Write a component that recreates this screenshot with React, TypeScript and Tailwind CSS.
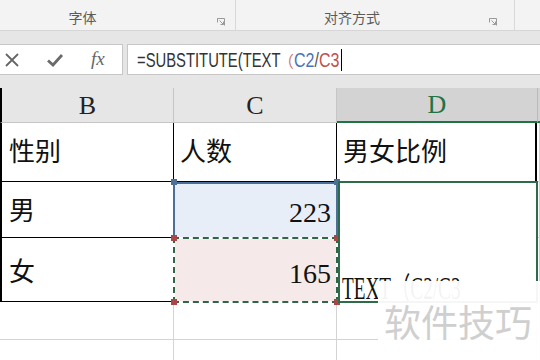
import React from "react";

const serif = { fontFamily: '"Liberation Serif", "Noto Sans CJK SC", serif' };
const sans = { fontFamily: '"Liberation Sans", "Noto Sans CJK SC", sans-serif' };

function Launcher() {
  return (
    <svg width="8" height="8" viewBox="0 0 8 8" className="text-[#9a9a9a]">
      <path d="M0.5 0.5h7v7" fill="none" stroke="currentColor" strokeWidth="1" />
      <path d="M0.5 0.5v4M0.5 0.5h4M2.5 2.5l4 4M6.5 3.5v3h-3" fill="none" stroke="currentColor" strokeWidth="1" />
    </svg>
  );
}

function Ribbon() {
  return (
    <div className="h-[31px] bg-[#f3f3f3] border-b border-[#d6d6d6] flex text-[14px] text-[#5b5b5b]" style={sans}>
      <div className="w-[236px] border-r border-[#d8d8d8] relative flex items-end justify-center pb-[1px] pr-[70px]">
        <span>字体</span>
        <div className="absolute right-[10px] top-[18px]">
          <Launcher />
        </div>
      </div>
      <div className="w-[279px] border-r border-[#d8d8d8] relative flex items-end justify-center pb-[1px] pr-[46px]">
        <span>对齐方式</span>
        <div className="absolute right-[17px] top-[18px]">
          <Launcher />
        </div>
      </div>
      <div className="flex-1" />
    </div>
  );
}

function FormulaBar() {
  return (
    <div className="bg-[#e6e6e6] pt-[13px] pb-[13px]">
      <div className="h-[31px] flex gap-[4px]">
        <div className="w-[123px] bg-white border-y border-r border-[#c6c6c6] flex items-center text-[#5f5f5f]">
          <svg width="16" height="16" viewBox="0 0 16 16" className="ml-[4px]">
            <path d="M2 2L14 14M14 2L2 14" stroke="#666" strokeWidth="1.8" />
          </svg>
          <svg width="18" height="16" viewBox="0 0 18 16" className="ml-[26px]">
            <path d="M2 8.5L7 13L16 3" stroke="#6a6a6a" strokeWidth="2.8" fill="none" />
          </svg>
          <span className="ml-[27px] italic text-[19px] text-[#666]" style={serif}>
            fx
          </span>
        </div>
        <div className="flex-1 bg-white border-y border-l border-[#c6c6c6] flex items-center pl-[9px] text-[20px] text-[#333]" style={sans}>
          <span className="inline-block w-[144px] overflow-hidden">
            <span className="inline-block origin-left scale-x-[0.74] whitespace-nowrap">=SUBSTITUTE(TEXT</span>
          </span>
          <span className="inline-block w-[16px] text-[#c57b7b] text-[16px] -ml-[3px]" style={{ fontFamily: '"Noto Sans CJK SC", sans-serif' }}>（</span>
          <span className="inline-block w-[46px] overflow-hidden">
            <span className="inline-block origin-left scale-x-[0.8] whitespace-nowrap">
              <span className="text-[#4a74b4]">C2</span>
              <span className="text-[#555]">/</span>
              <span className="text-[#c0504d]">C3</span>
            </span>
          </span>
          <span className="ml-[1px] w-[1px] h-[22px] bg-black" />
        </div>
      </div>
    </div>
  );
}

function Handle({ color, x, y }: { color: string; x: number; y: number }) {
  return (
    <div
      className={`absolute w-[6px] h-[6px] ${color}`}
      style={{ left: x - 3, top: y - 3 }}
    />
  );
}

function Sheet() {
  const grid = "border-r border-b border-[#d4d4d4]";
  return (
    <div className="relative">
      <div className="grid grid-cols-[174px_163px_200px_1fr] grid-rows-[35px_59px_56px_64px_38px_40px]">
        {/* header */}
        <div className="bg-[#e6e6e6] border-r border-[#c6c6c6] border-b border-[#c6c6c6] border-l-2 border-l-black flex items-center justify-center text-[26px] text-[#222]" style={serif}>B</div>
        <div className="bg-[#e6e6e6] border-r border-[#c6c6c6] border-b border-b-[#c6c6c6] flex items-center justify-center text-[26px] text-[#222]" style={serif}>C</div>
        <div className="bg-[#d3d3d3] border-b-2 border-[#217346] flex items-center justify-center text-[26px] text-[#217346]" style={serif}>D</div>
        <div className="bg-[#d3d3d3] border-b-2 border-[#217346] border-l border-l-[#b8b8b8]" />

        {/* row 1 */}
        <div className="border-l-2 border-r border-b border-black flex items-center pl-[7px] text-[26px] text-[#111]" style={serif}>性别</div>
        <div className="border-r border-b border-black flex items-center pl-[6px] text-[26px] text-[#111]" style={serif}>人数</div>
        <div className="border-r-2 border-black flex items-center pl-[6px] text-[26px] text-[#111]" style={serif}>男女比例</div>
        <div className={grid} />

        {/* row 2 */}
        <div className="border-l-2 border-r border-b border-black flex items-center pl-[7px] pt-[4px] text-[26px] text-[#111]" style={serif}>男</div>
        <div className="bg-[#e8eef8] flex items-center justify-end pr-[6px] pt-[6px] text-[28px] text-[#111]" style={serif}>223</div>
        <div />
        <div className={grid} />

        {/* row 3 */}
        <div className="border-l-2 border-r border-b border-black flex items-center pl-[7px] pt-[6px] text-[26px] text-[#111]" style={serif}>女</div>
        <div className="bg-[#f6e9e9] flex items-center justify-end pr-[6px] pt-[8px] text-[28px] text-[#111]" style={serif}>165</div>
        <div />
        <div className={grid} />

        {/* row 4, 5 */}
        <div className={grid} />
        <div className={grid} />
        <div className={grid} />
        <div className={grid} />
        <div className={grid} />
        <div className={grid} />
        <div className={grid} />
        <div className={grid} />
      </div>

      {/* C2 selection */}
      <div className="absolute left-[173px] top-[94px] w-[165px] h-[57px] border-2 border-[#4b6f96]" />
      {/* C3 marching ants */}
      <div className="absolute left-[173px] top-[149px] w-[165px] h-[66px] border-2 border-white" />
      <div className="absolute left-[173px] top-[149px] w-[165px] h-[66px] border-2 border-dashed border-[#2f6648]" />
      <Handle color="bg-[#4b6f96]" x={174} y={94} />
      <Handle color="bg-[#4b6f96]" x={337} y={94} />
      <Handle color="bg-[#a94646]" x={174} y={150} />
      <Handle color="bg-[#a94646]" x={337} y={150} />
      <Handle color="bg-[#a94646]" x={174} y={214} />
      <Handle color="bg-[#a94646]" x={337} y={214} />

      {/* D2 editing cell */}
      <div className="absolute left-[338px] top-[93px] w-[200px] h-[122px] border-2 border-[#2e6b48] bg-white overflow-hidden">
        <div className="absolute left-[2px] top-[90px] whitespace-nowrap text-[31px] text-[#111] origin-left scale-x-[0.62] leading-none" style={serif}>
          TEXT（C2/C3
        </div>
      </div>

      {/* watermark */}
      <div className="absolute left-[378px] top-[193px] w-[162px] h-[80px] bg-white/95 flex items-center pl-[6px]">
        <span className="text-[37px] text-[#cfcfcf] leading-none" style={{ fontFamily: '"Noto Sans CJK SC", sans-serif' }}>
          软件技巧
        </span>
      </div>
    </div>
  );
}

export default function App() {
  return (
    <div className="w-[540px] h-[360px] overflow-hidden bg-white">
      <Ribbon />
      <FormulaBar />
      <Sheet />
    </div>
  );
}
